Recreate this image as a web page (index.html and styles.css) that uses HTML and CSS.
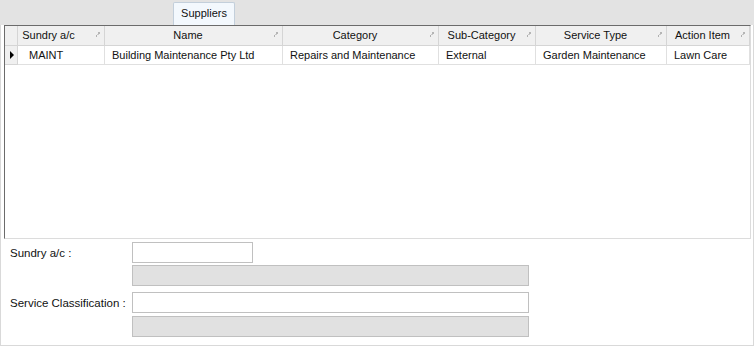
FILE: index.html
```html
<!DOCTYPE html>
<html>
<head>
<meta charset="utf-8">
<link rel="stylesheet" href="styles.css">
</head>
<body>
<div class="window">
  <div class="tabstrip">
    <div class="tab">Suppliers</div>
  </div>
  <div class="panel">
    <div class="grid">
      <div class="row head">
        <div class="cell rowhdr"></div>
        <div class="cell hcell hfirst"><span>Sundry a/c</span><i class="pin"></i></div>
        <div class="cell hcell"><span>Name</span><i class="pin"></i></div>
        <div class="cell hcell"><span>Category</span><i class="pin"></i></div>
        <div class="cell hcell"><span>Sub-Category</span><i class="pin"></i></div>
        <div class="cell hcell"><span>Service Type</span><i class="pin"></i></div>
        <div class="cell hcell last"><span>Action Item</span><i class="pin"></i></div>
      </div>
      <div class="row data">
        <div class="cell rowhdr"><span class="arrow"></span></div>
        <div class="cell first">MAINT</div>
        <div class="cell">Building Maintenance Pty Ltd</div>
        <div class="cell">Repairs and Maintenance</div>
        <div class="cell">External</div>
        <div class="cell">Garden Maintenance</div>
        <div class="cell last">Lawn Care</div>
      </div>
    </div>
    <div class="form">
      <div class="label">Sundry a/c :</div>
      <div class="fields">
        <div class="input short"></div>
        <div class="input readonly gap-s"></div>
      </div>
      <div class="label second">Service Classification :</div>
      <div class="fields second">
        <div class="input"></div>
        <div class="input readonly gap-m"></div>
      </div>
    </div>
  </div>
</div>
</body>
</html>
```
FILE: styles.css
```css
* { box-sizing: border-box; }
html, body { margin: 0; padding: 0; }
body {
  width: 754px;
  height: 346px;
  background: #e3e3e3;
  font-family: "Liberation Sans", Arial, sans-serif;
  font-size: 11px;
  color: #111;
  overflow: hidden;
}
.window { width: 754px; height: 346px; display: flex; flex-direction: column; }
.tabstrip {
  height: 25px;
  padding-left: 173px;
  padding-top: 2px;
  display: flex;
}
.tab {
  width: 62px;
  height: 23px;
  background: #f3f8fd;
  border: 1px solid #c3cfdb;
  border-bottom: none;
  border-radius: 2px 2px 0 0;
  text-align: center;
  line-height: 20px;
  font-size: 11px;
}
.panel {
  flex: 1;
  background: #fff;
  border: 1px solid #d9d9d9;
  border-top: none;
  padding: 0 2px 0 3px;
  display: flex;
  flex-direction: column;
}
.grid {
  height: 214px;
  border-top: 1px solid #6b6b6b;
  border-left: 1px solid #6b6b6b;
  border-right: 1px solid #dcdcdc;
  border-bottom: 1px solid #dcdcdc;
  background: #fff;
}
.row {
  display: grid;
  grid-template-columns: 13px 87px 178px 156px 97px 131px 83px;
}
.head { height: 20px; background: #f0f0f0; }
.head .cell {
  border-right: 1px solid #d5d5d5;
  border-bottom: 1px solid #d5d5d5;
  height: 20px;
}
.hcell {
  display: flex;
  align-items: center;
  justify-content: center;
  position: relative;
  padding: 0 11px 1px 0;
}
.hcell.hfirst { padding-right: 25px; }
.pin {
  position: absolute;
  right: 4px;
  top: 6px;
  width: 4px;
  height: 5px;
  background:
    linear-gradient(#b5b5b5, #b5b5b5) 2px 0 / 2px 2px no-repeat,
    linear-gradient(#c9c9c9, #c9c9c9) 1px 2px / 2px 1px no-repeat,
    linear-gradient(#b0b0b0, #b0b0b0) 0 3px / 1px 2px no-repeat;
}
.data { height: 19px; }
.data .cell {
  border-right: 1px solid #e0e0e0;
  border-bottom: 1px solid #e0e0e0;
  height: 19px;
  line-height: 18px;
  padding-left: 7px;
  white-space: nowrap;
}
.data .cell.first { padding-left: 11px; }
.data .rowhdr {
  background: #f0f0f0;
  padding-left: 0 !important;
  display: flex;
  align-items: center;
  justify-content: center;
  border-right-color: #d5d5d5 !important;
  border-bottom-color: #d5d5d5 !important;
}
.arrow {
  width: 0;
  height: 0;
  border-top: 4px solid transparent;
  border-bottom: 4px solid transparent;
  border-left: 4px solid #000;
  margin-left: 2px;
}
.form {
  display: grid;
  grid-template-columns: 122px 400px;
  padding: 3px 0 0 6px;
  font-size: 11.5px;
}
.label { padding-top: 5px; }
.label.second { padding-top: 11px; }
.fields { display: flex; flex-direction: column; }
.fields.second { padding-top: 6px; }
.input {
  width: 397px;
  height: 21px;
  border: 1px solid #c0c0c0;
  background: #fff;
}
.input.short { width: 121px; }
.input.readonly { background: #e1e1e1; }
.gap-s { margin-top: 2px; }
.gap-m { margin-top: 3px; }
```
